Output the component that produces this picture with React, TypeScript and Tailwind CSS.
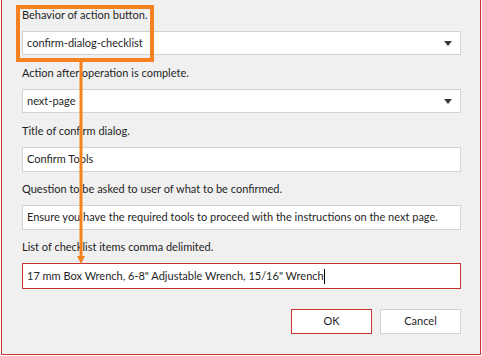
import type { ReactNode } from 'react'

const font = { fontFamily: 'Lato, "Open Sans", sans-serif' }

function Label({ children }: { children: ReactNode }) {
  return <div className="h-[16px] leading-[16px] mb-[8px] text-[11px] text-[#1f1f1f] whitespace-nowrap">{children}</div>
}

function Select({ value }: { value: string }) {
  return (
    <div className="h-[24px] bg-white border border-[#d3d3d3] flex items-center justify-between pl-[4px] pr-[8px] text-[11px] text-[#1f1f1f]">
      <span>{value}</span>
      <svg width="8" height="5" viewBox="0 0 8 5">
        <path d="M0 0 H8 L4 5 Z" fill="#3a3a3a" />
      </svg>
    </div>
  )
}

function Input({ value, h = 'h-[25px]', active }: { value: string; h?: string; active?: boolean }) {
  return (
    <div
      className={`${h} bg-white border flex items-center pl-[4px] text-[11px] text-[#1f1f1f] whitespace-nowrap ${
        active ? 'border-[#c8322f]' : 'border-[#d3d3d3]'
      }`}
    >
      <span>{value}</span>
      {active && <span className="w-px h-[15px] bg-black" />}
    </div>
  )
}

export default function App() {
  return (
    <div className="w-[482px] h-[356px] bg-white" style={font}>
      <div className="relative ml-px w-[480px] h-[355px] bg-[#f0f0f0] border-x border-b border-[#c8322f] pt-[7px] pl-[20px] pr-[19px]">
        <Label>Behavior of action button.</Label>
        <Select value="confirm-dialog-checklist" />

        <div className="mt-[10px]">
          <Label>Action after operation is complete.</Label>
          <Select value="next-page" />
        </div>

        <div className="mt-[10px]">
          <Label>Title of confirm dialog.</Label>
          <Input value="Confirm Tools" />
        </div>

        <div className="mt-[9px]">
          <Label>Question to be asked to user of what to be confirmed.</Label>
          <Input value="Ensure you have the required tools to proceed with the instructions on the next page." />
        </div>

        <div className="mt-[9px]">
          <Label>List of checklist items comma delimited.</Label>
          <Input value={'17 mm Box Wrench, 6-8" Adjustable Wrench, 15/16" Wrench'} h="h-[26px]" active />
        </div>

        <div className="mt-[20px] flex justify-end gap-[8px] text-[11px] text-[#1f1f1f]">
          <button className="w-[81px] h-[25px] bg-white border border-[#c8322f]">OK</button>
          <button className="w-[81px] h-[25px] bg-white border border-[#d3d3d3]">Cancel</button>
        </div>

        {/* annotation */}
        <div className="absolute left-[14px] top-[5px] w-[138px] h-[57px] border-[4px] border-[#f5821f]" />
        <svg className="absolute left-[73px] top-[62px]" width="12" height="203" viewBox="0 0 12 203">
          <rect x="4.5" y="0" width="3" height="195" fill="#f5821f" />
          <path d="M2 194 H10 L6 202 Z" fill="#f5821f" />
        </svg>
      </div>
    </div>
  )
}
